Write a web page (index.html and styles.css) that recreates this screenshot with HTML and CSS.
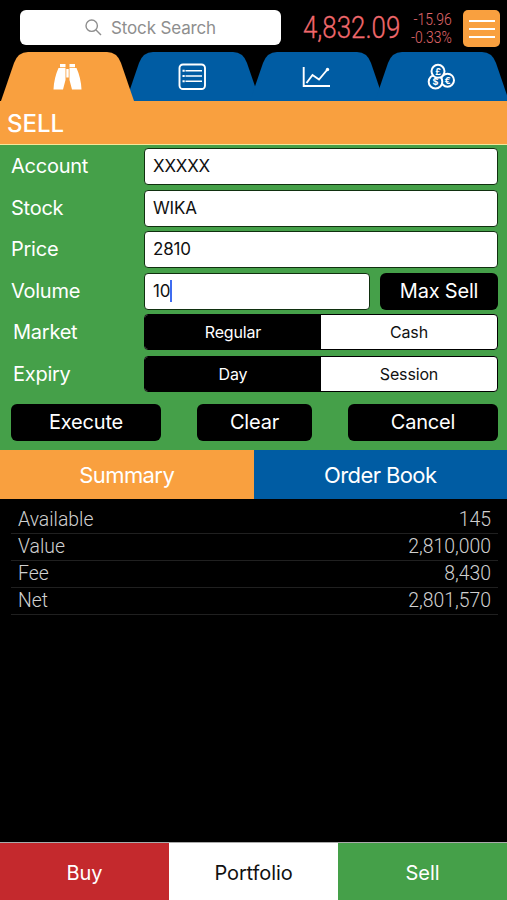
FILE: index.html
```html
<!DOCTYPE html>
<html lang="en">
<head>
    <meta charset="UTF-8">
    <meta name="viewport" content="width=device-width, initial-scale=1.0">
    <title>Sell Order</title>
    <link rel="stylesheet" href="styles.css">
</head>
<body>
    <div class="app">
        <!-- Search and index -->
        <header class="top-bar">
            <div class="search">
                <svg class="search-icon" viewBox="0 0 17 17"><circle cx="6.7" cy="6.7" r="5.7"/><path d="M10.8 10.8L16 16"/></svg>
                <span class="search-text">Stock Search</span>
            </div>
            <div class="index-value"><span>4,832.09</span></div>
            <div class="index-change">
                <span>-15.96</span>
                <span>-0.33%</span>
            </div>
            <button class="menu-button" aria-label="Menu">
                <i></i><i></i><i></i>
            </button>
        </header>

        <!-- Icon tabs -->
        <nav class="tabs">
            <a class="tab active">
                <svg viewBox="0 0 134 49">
                    <path class="tab-shape" d="M0 49L13 11Q17 0 27 0H106Q116 0 120 11L133 49Z"/>
                    <g class="solid">
                        <path d="M59 12h5.500v3.200h-5.500zM68.500 12h5.500v3.200h-5.500z"/>
                        <path d="M57.500 16H64.500V28L62 37.500H52.500Q53 26 57.500 16ZM75.500 16H68.500V28L71 37.500H80.500Q80 26 75.500 16Z"/>
                        <path d="M65.300 17H67.700V25.500H65.300Z"/>
                    </g>
                </svg>
            </a>
            <a class="tab">
                <svg viewBox="0 0 134 49">
                    <path class="tab-shape" d="M0 49L13 11Q17 0 27 0H107Q117 0 121 11L134 49Z"/>
                    <g class="line">
                        <rect x="53.500" y="12.500" width="25.500" height="24.500" rx="3.500"/>
                        <path class="thin" d="M59.500 18.800H76M59.500 24H76M59.500 29.200H76"/>
                        <path d="M56.500 18.800h2.200M56.500 24h2.200M56.500 29.200h2.200"/>
                    </g>
                </svg>
            </a>
            <a class="tab">
                <svg viewBox="0 0 134 49">
                    <path class="tab-shape" d="M0 49L13 11Q17 0 27 0H107Q117 0 121 11L134 49Z"/>
                    <g class="line">
                        <path d="M53.700 15V34H80"/>
                        <path d="M56.500 31L62.500 23L69 27.500L77 18"/>
                        <circle class="dot" cx="77.500" cy="17.500" r="1.700"/>
                    </g>
                </svg>
            </a>
            <a class="tab">
                <svg viewBox="0 0 134 49">
                    <path class="tab-shape" d="M0 49L13 11Q17 0 27 0H107Q117 0 121 11L134 49Z"/>
                    <g class="coins">
                        <circle cx="72.500" cy="28.200" r="6.500"/>
                        <circle cx="60.500" cy="29.700" r="6.800"/>
                        <circle cx="63" cy="19.300" r="6.500"/>
                        <text x="63" y="22.500">£</text>
                        <text x="60.500" y="33">$</text>
                        <text x="72.500" y="31.500">€</text>
                    </g>
                </svg>
            </a>
        </nav>

        <h1 class="page-title">SELL</h1>

        <!-- Order form -->
        <form class="order-form">
            <div class="row">
                <label class="label">Account</label>
                <div class="field account">XXXXX</div>
            </div>
            <div class="row">
                <label class="label">Stock</label>
                <div class="field">WIKA</div>
            </div>
            <div class="row">
                <label class="label">Price</label>
                <div class="field">2810</div>
            </div>
            <div class="row">
                <label class="label">Volume</label>
                <div class="field">10<span class="caret"></span></div>
                <button type="button" class="btn max-sell">Max Sell</button>
            </div>
            <div class="row">
                <label class="label indent">Market</label>
                <div class="toggle">
                    <span class="option selected">Regular</span>
                    <span class="option">Cash</span>
                </div>
            </div>
            <div class="row">
                <label class="label indent">Expiry</label>
                <div class="toggle">
                    <span class="option selected">Day</span>
                    <span class="option">Session</span>
                </div>
            </div>
            <div class="actions">
                <button type="button" class="btn wide">Execute</button>
                <button type="button" class="btn">Clear</button>
                <button type="button" class="btn wide">Cancel</button>
            </div>
        </form>

        <div class="sub-tabs">
            <div class="sub-tab selected">Summary</div>
            <div class="sub-tab">Order Book</div>
        </div>

        <!-- Order summary -->
        <div class="summary">
            <div class="summary-row"><span>Available</span><span>145</span></div>
            <div class="summary-row"><span>Value</span><span>2,810,000</span></div>
            <div class="summary-row"><span>Fee</span><span>8,430</span></div>
            <div class="summary-row"><span>Net</span><span>2,801,570</span></div>
        </div>

        <footer class="bottom-bar">
            <div class="bottom-item buy">Buy</div>
            <div class="bottom-item portfolio">Portfolio</div>
            <div class="bottom-item sell">Sell</div>
        </footer>
    </div>
</body>
</html>
```
FILE: styles.css
```css
* {
    box-sizing: border-box;
}

body {
    margin: 0;
    background-color: #000;
    font-family: Inter, "Liberation Sans", sans-serif;
    color: #fff;
}

.app {
    display: flex;
    flex-direction: column;
    width: 507px;
    height: 900px;
    overflow: hidden;
}

.top-bar {
    display: flex;
    height: 52px;
    flex-shrink: 0;
    padding: 10px 7px 0 20px;
}

.search {
    display: flex;
    align-items: center;
    justify-content: center;
    gap: 9px;
    width: 261px;
    height: 35px;
    background-color: #fff;
    border-radius: 6px;
    color: #8e8e8e;
    font-size: 17px;
    letter-spacing: -0.15px;
}

.search-icon {
    width: 17px;
    height: 17px;
    fill: none;
    stroke: #8e8e8e;
    stroke-width: 1.4;
}

.index-value {
    width: 97px;
    margin-left: 22px;
    font: 300 31px/36px Roboto, sans-serif;
    color: #f0686c;
    -webkit-text-stroke: 0.3px #f0686c;
}

.index-value span {
    display: inline-block;
    transform: scaleX(0.835);
    transform-origin: left;
}

.index-change {
    display: flex;
    flex-direction: column;
    align-items: flex-end;
    width: 52px;
    font: 300 17px/18px Roboto, sans-serif;
    color: #e0686c;
}

.index-change span {
    transform: scaleX(0.82);
    transform-origin: right;
}

.menu-button {
    display: flex;
    flex-direction: column;
    align-items: center;
    justify-content: center;
    gap: 6px;
    width: 37px;
    height: 37px;
    margin-left: auto;
    padding: 0;
    border: none;
    border-radius: 5px;
    background-color: #f9a03f;
}

.menu-button i {
    width: 26px;
    height: 2px;
    background-color: #fff;
}

.tabs {
    display: flex;
    flex-shrink: 0;
    height: 49px;
    padding-left: 1px;
}

.tab {
    flex: 0 0 134px;
    height: 49px;
    margin-right: -9.3px;
}

.tab.active {
    z-index: 1;
}

.tab svg {
    display: block;
    width: 134px;
    height: 49px;
}

.tab-shape {
    fill: #005ca3;
}

.active .tab-shape {
    fill: #f9a03f;
}

.solid,
.dot {
    fill: #fff;
}

.line {
    fill: none;
    stroke: #fff;
    stroke-width: 1.9;
}

.line .thin {
    stroke-width: 1.4;
}

.line .dot {
    fill: #fff;
    stroke: none;
}

.coins circle {
    fill: #005ca3;
    stroke: #fff;
    stroke-width: 2;
}

.coins text {
    fill: #fff;
    font-size: 9px;
    font-weight: bold;
    text-anchor: middle;
}

.page-title {
    height: 44px;
    flex-shrink: 0;
    margin: 0;
    padding-left: 7px;
    background-color: #f9a03f;
    border-bottom: 1px solid #f4e89a;
    font-size: 24px;
    font-weight: 500;
    line-height: 45px;
}

.order-form {
    display: flex;
    flex-direction: column;
    gap: 4.6px;
    flex-shrink: 0;
    height: 305px;
    padding: 3px 9px 0 11px;
    background-color: #45a049;
}

.row {
    display: flex;
    height: 37px;
}

.label {
    width: 133px;
    font-size: 20px;
    letter-spacing: -0.25px;
    line-height: 36px;
}

.indent {
    padding-left: 2px;
}

.field {
    display: flex;
    align-items: center;
    flex: 1;
    padding-left: 8px;
    padding-bottom: 1px;
    background-color: #fff;
    border: 1px solid #10300f;
    border-radius: 4px;
    color: #111;
    font-size: 17px;
    letter-spacing: -0.2px;
}

.caret {
    width: 2px;
    height: 22px;
    background-color: #3f6cf0;
}

.btn {
    width: 115px;
    height: 37px;
    padding: 0;
    border: none;
    border-radius: 6px;
    background-color: #000;
    color: #fff;
    font-family: inherit;
    font-size: 20px;
    letter-spacing: -0.2px;
}

.max-sell {
    width: 118px;
    margin-left: 10px;
}

.toggle {
    display: flex;
    flex: 1;
    height: 36px;
    border: 1px solid #000;
    border-radius: 4px;
    background-color: #fff;
    overflow: hidden;
}

.option {
    flex: 1;
    color: #111;
    font-size: 16px;
    letter-spacing: -0.15px;
    line-height: 35px;
    text-align: center;
}

.option.selected {
    background-color: #000;
    color: #fff;
}

.actions {
    display: flex;
    justify-content: space-between;
    margin-top: 6px;
}

.btn.wide {
    width: 150px;
}

.sub-tabs {
    display: flex;
    flex-shrink: 0;
    height: 49px;
}

.sub-tab {
    flex: 1;
    background-color: #005ca3;
    font-size: 22px;
    letter-spacing: -0.6px;
    line-height: 50px;
    text-align: center;
}

.sub-tab.selected {
    background-color: #f9a03f;
}

.summary {
    flex: 1;
    padding: 8px 9px 0 11px;
    font: 300 19.4px/25px Roboto, sans-serif;
    color: #d0d0d0;
}

.summary-row {
    display: flex;
    justify-content: space-between;
    height: 27px;
    padding: 0 7px;
    border-bottom: 1px solid #202020;
}

.bottom-bar {
    display: flex;
    height: 58px;
    flex-shrink: 0;
    border-top: 1px solid #aaa;
}

.bottom-item {
    flex: 1;
    font-size: 20px;
    letter-spacing: -0.1px;
    line-height: 60px;
    text-align: center;
}

.buy {
    background-color: #c4292d;
}

.portfolio {
    background-color: #fff;
    color: #111;
}

.sell {
    background-color: #45a049;
}
```
